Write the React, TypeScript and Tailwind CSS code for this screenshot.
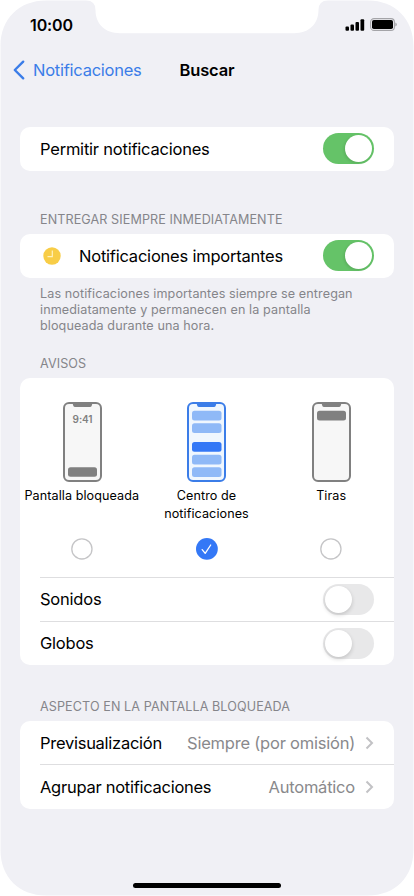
import type { ReactNode } from "react";

function Toggle({ on = false }: { on?: boolean }) {
  return (
    <span
      role="switch"
      aria-checked={on}
      className={
        on
          ? "mb-px flex h-[31px] w-[51px] shrink-0 items-center justify-end rounded-full bg-[#65c368] p-[2px]"
          : "flex h-[31px] w-[51px] shrink-0 items-center rounded-full bg-[#e8e8e9] p-[2px]"
      }
    >
      <span
        className={
          on
            ? "size-[27px] rounded-full bg-white shadow-[-1px_1px_3px_rgba(0,0,0,0.12)]"
            : "size-[27px] rounded-full bg-white shadow-[0_2px_4px_rgba(0,0,0,0.16)]"
        }
      />
    </span>
  );
}

function Label({ children, className }: { children: ReactNode; className: string }) {
  return (
    <h2 className={`pl-5 text-[12.6px] leading-4 tracking-[0.09px] whitespace-nowrap text-[#85858a] ${className}`}>
      {children}
    </h2>
  );
}

function Card({ children }: { children: ReactNode }) {
  return <section className="rounded-[10px] bg-white">{children}</section>;
}

function Row({ children, divided = false, className = "h-11" }: { children: ReactNode; divided?: boolean; className?: string }) {
  return (
    <div
      className={`ml-5 flex items-center pr-5 text-[16.5px] tracking-[-0.22px] ${divided ? "border-t border-[#dedee0]" : ""} ${className}`}
    >
      {children}
    </div>
  );
}

function Disclosure() {
  return (
    <svg className="ml-[10px] shrink-0" width="9" height="14" viewBox="0 0 9 14" fill="none" stroke="#c2c2c5" strokeWidth="2">
      <path d="M1.500 1.500 7 7l-5.500 5.500" />
    </svg>
  );
}

function PhoneFrame({ blue = false, children }: { blue?: boolean; children: ReactNode }) {
  const color = blue ? "#3b7de8" : "#808080";
  return (
    <svg className={blue ? "-ml-px" : ""} width="39" height="80" viewBox="0 0 39 80">
      <rect x="1" y="1" width="37" height="78" rx="5" fill={blue ? "#f0f7fe" : "#f7f7f7"} stroke={color} strokeWidth="2" />
      <path d="M9.500 1h20l-.7 2.500q-.4 1.500-2 1.500H12.200q-1.600 0-2-1.500Z" fill={color} />
      {children}
    </svg>
  );
}

function Option({ art, title, checked = false }: { art: ReactNode; title: ReactNode; checked?: boolean }) {
  return (
    <div className="flex flex-1 flex-col items-center">
      {art}
      <div className="mt-[5px] mr-px h-[51px] text-center text-[12.6px] leading-[18px] tracking-[0.08px] whitespace-nowrap text-black">
        {title}
      </div>
      <svg className="-ml-px" width="22" height="22" viewBox="0 0 22 22" fill="none">
        {checked ? (
          <>
            <circle cx="10.900" cy="10.900" r="10.900" fill="#3478f6" />
            <path d="m6.200 11.600 3 3.700 5.500-8.300" stroke="#fff" strokeWidth="1.300" strokeLinecap="round" strokeLinejoin="round" />
          </>
        ) : (
          <circle cx="10.900" cy="10.900" r="10.100" stroke="#c5c5c7" strokeWidth="1.300" />
        )}
      </svg>
    </div>
  );
}

export default function App() {
  return (
    <div className="h-[896px] w-[414px] overflow-hidden bg-white font-['Inter','Liberation_Sans',sans-serif] text-black">
      <div className="relative isolate flex h-[896px] flex-col">
        <svg className="absolute inset-0 -z-10" width="414" height="896" viewBox="0 0 414 896">
          <path
            fill="#f0f0f5"
            d="M46 .5H86Q95.500.500 95.500 10C95.500 24 105 33.200 120 33.200H294C309 33.200 318.500 24 318.500 10Q318.500.500 328 .5H368C395 .5 413.500 19 413.500 46V850C413.500 877 395 895.500 368 895.500H46C19 895.500 .5 877 .5 850V46C.5 19 19 .5 46 .5Z"
          />
        </svg>

        <header>
          <div className="flex h-[49px] items-center justify-between pr-[17px] pl-[30px]">
            <time className="text-[16px] font-semibold tracking-[-0.1px]">10:00</time>
            <div className="flex items-center gap-[5px]">
              <svg width="20" height="12" viewBox="0 0 20 12">
                <rect x="0.500" y="7.500" width="3.500" height="4.200" rx="1" />
                <rect x="5.500" y="5.500" width="3.500" height="6.200" rx="1" />
                <rect x="10.500" y="3" width="3.500" height="8.700" rx="1" />
                <rect x="15.500" y="0.300" width="3.700" height="11.400" rx="1" />
              </svg>
              <svg width="27" height="13" viewBox="0 0 27 13">
                <rect x=".6" y=".6" width="23.800" height="11.800" rx="3.500" fill="none" stroke="#a4a4a8" strokeWidth="1.100" />
                <rect x="2" y="2" width="21" height="9" rx="1.800" />
                <path d="M25.300 4.500q1.500.5 1.500 2t-1.500 2Z" fill="#a4a4a8" />
              </svg>
            </div>
          </div>
          <div className="grid h-[42px] grid-cols-[1fr_auto_1fr] items-center text-[16.5px]">
            <div className="flex items-center pl-[13px] text-[#3b7de8]">
              <svg className="mr-[8px]" width="12" height="20" viewBox="0 0 12 20" fill="none" stroke="currentColor" strokeWidth="2.400" strokeLinecap="round" strokeLinejoin="round">
                <path d="M10.200 1.700 1.800 10l8.400 8.300" />
              </svg>
              <span className="pt-px tracking-[-0.25px]">Notificaciones</span>
            </div>
            <h1 className="pt-px font-semibold tracking-[-0.15px]">Buscar</h1>
          </div>
        </header>

        <main className="mt-9 flex flex-col px-5">
          <Card>
            <Row>
              <span className="flex-1 pt-px">Permitir notificaciones</span>
              <Toggle on />
            </Row>
          </Card>

          <Label className="mt-[41px] mb-[6px]">ENTREGAR SIEMPRE INMEDIATAMENTE</Label>
          <Card>
            <Row>
              <svg className="mr-[18px] ml-[3px]" width="18" height="18" viewBox="0 0 18 18" fill="none">
                <circle cx="9" cy="9" r="8.700" fill="#f8cd47" />
                <path d="M9.300 3.500v6.200H4.500" stroke="#fff2bd" strokeWidth="1.200" />
              </svg>
              <span className="flex-1 pt-px">Notificaciones importantes</span>
              <Toggle on />
            </Row>
          </Card>
          <p className="mt-2 pl-5 text-[12.6px] leading-4 tracking-[0.1px] whitespace-nowrap text-[#85858a]">
            Las notificaciones importantes siempre se entregan
            <br />
            inmediatamente y permanecen en la pantalla
            <br />
            bloqueada durante una hora.
          </p>

          <Label className="mt-[22px] mb-[6px]">AVISOS</Label>
          <Card>
            <div className="flex h-[199px] pt-6">
              <Option
                title="Pantalla bloqueada"
                art={
                  <PhoneFrame>
                    <text x="19.500" y="21" textAnchor="middle" fill="#808080" className="text-[10px] font-semibold tracking-[-0.1px]">
                      9:41
                    </text>
                    <rect x="5" y="65.300" width="29" height="9.500" rx="2.500" fill="#808080" />
                  </PhoneFrame>
                }
              />
              <Option
                checked
                title={
                  <>
                    Centro de
                    <br />
                    notificaciones
                  </>
                }
                art={
                  <PhoneFrame blue>
                    {[8.7, 21.2, 52.7, 65.3].map((y) => (
                      <rect key={y} x="5" y={y} width="29.500" height="9.700" rx="2.500" fill="#8fb9f7" />
                    ))}
                    <rect x="5" y="40" width="29.500" height="9.700" rx="2.500" fill="#3478f6" />
                  </PhoneFrame>
                }
              />
              <Option
                title="Tiras"
                art={
                  <PhoneFrame>
                    <rect x="5" y="8.800" width="29" height="9.700" rx="2.500" fill="#808080" />
                  </PhoneFrame>
                }
              />
            </div>
            <Row divided>
              <span className="flex-1">Sonidos</span>
              <Toggle />
            </Row>
            <Row divided>
              <span className="flex-1">Globos</span>
              <Toggle />
            </Row>
          </Card>

          <Label className="mt-[34px] mb-[6px]">ASPECTO EN LA PANTALLA BLOQUEADA</Label>
          <Card>
            <Row className="h-[43px]">
              <span className="flex-1 pt-px tracking-[-0.27px]">Previsualización</span>
              <span className="pt-px text-[#89898c]">Siempre (por omisión)</span>
              <Disclosure />
            </Row>
            <Row divided className="h-[45px]">
              <span className="flex-1 pt-px tracking-[-0.27px]">Agrupar notificaciones</span>
              <span className="pt-px text-[#89898c]">Automático</span>
              <Disclosure />
            </Row>
          </Card>
        </main>

        <div className="mx-auto mt-auto mb-[8px] h-[5px] w-[148px] rounded-full bg-black" />
      </div>
    </div>
  );
}
